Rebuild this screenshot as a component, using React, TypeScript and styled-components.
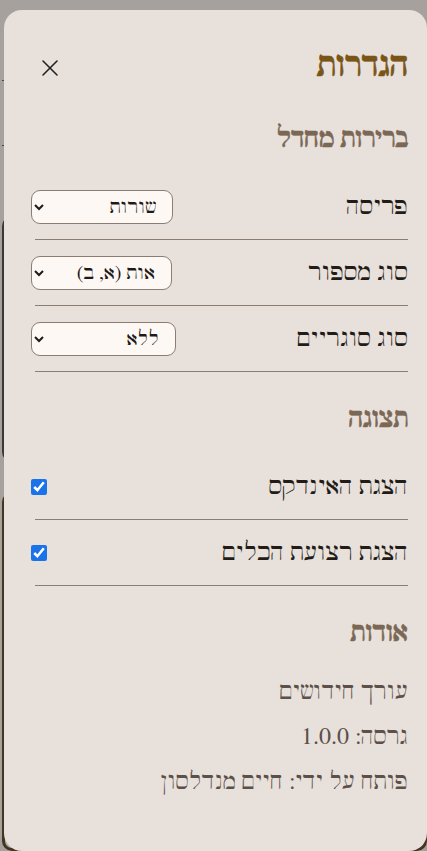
import React, { useState } from 'react';
import styled, { createGlobalStyle } from 'styled-components';
import { X } from 'lucide-react';

const GlobalStyle = createGlobalStyle`
    html, body {
        margin: 0;
        padding: 0;
        height: 100%;
        overflow: hidden;
        background: #f4eee8;
        font-family: "FreeSerif", "Liberation Serif", serif;
    }
    #root {
        height: 100%;
    }
`;

type SelectRowProps = {
    label: string;
    options: string[];
    width: number;
};

const SelectRow = ({ label, options, width }: SelectRowProps) => {
    const [value, setValue] = useState(options[0]);
    return (
        <Row>
            <Label>{label}</Label>
            <Select $width={width} value={value} onChange={(event) => setValue(event.target.value)}>
                {options.map((option) => (
                    <option key={option} value={option}>{option}</option>
                ))}
            </Select>
        </Row>
    );
};

const CheckRow = ({ label }: { label: string }) => {
    const [checked, setChecked] = useState(true);
    return (
        <Row>
            <Label>{label}</Label>
            <Checkbox type="checkbox" checked={checked} onChange={(event) => setChecked(event.target.checked)} />
        </Row>
    );
};

const App = () => {
    return (
        <>
            <GlobalStyle />
            <Page>
                <PageHeader />
                <PageToolbar />
                <PageCard />
                <PageCard $accent />
            </Page>
            <Overlay />
            <Drawer dir="rtl">
                <Header>
                    <Title>הגדרות</Title>
                    <CloseButton type="button" aria-label="סגירה">
                        <X size={28} strokeWidth={1.3} />
                    </CloseButton>
                </Header>

                <Section>
                    <SectionTitle>ברירות מחדל</SectionTitle>
                    <SelectRow label="פריסה" options={['שורות', 'עמודות']} width={142} />
                    <SelectRow label="סוג מספור" options={['אות (א, ב)', 'מספר (1, 2)']} width={141} />
                    <SelectRow label="סוג סוגריים" options={['ללא', 'עגולים', 'מרובעים']} width={145} />
                </Section>

                <Section>
                    <SectionTitle>תצוגה</SectionTitle>
                    <CheckRow label="הצגת האינדקס" />
                    <CheckRow label="הצגת רצועת הכלים" />
                </Section>

                <Section>
                    <SectionTitle>אודות</SectionTitle>
                    <About>
                        <AboutLine>עורך חידושים</AboutLine>
                        <AboutLine>גרסה: 1.0.0</AboutLine>
                        <AboutLine>פותח על ידי: חיים מנדלסון</AboutLine>
                    </About>
                </Section>
            </Drawer>
        </>
    );
};

const Page = styled.div`
    display: flex;
    flex-direction: column;
    height: 100%;
    padding: 0 0 0 2px;
    box-sizing: border-box;
`;

const PageHeader = styled.div`
    flex: none;
    height: 80px;
    border-bottom: 1px solid #555;
`;

const PageToolbar = styled.div`
    flex: none;
    height: 64px;
    margin-bottom: 70px;
    border-bottom: 1px solid #555;
`;

const PageCard = styled.div<{ $accent?: boolean }>`
    flex: ${({ $accent }) => ($accent ? '1' : 'none')};
    height: ${({ $accent }) => ($accent ? 'auto' : '240px')};
    margin-bottom: ${({ $accent }) => ($accent ? '0' : '30px')};
    border: 3px solid ${({ $accent }) => ($accent ? '#4a3414' : '#3e3a38')};
    border-radius: 10px;
    background: #fff;
`;

const Overlay = styled.div`
    position: fixed;
    inset: 0;
    background: rgba(60, 55, 52, 0.42);
`;

const Drawer = styled.aside`
    position: fixed;
    top: 10px;
    left: 4px;
    right: 0;
    bottom: 0;
    box-sizing: border-box;
    padding: 38px 19px 0 27px;
    background: #e8e0da;
    border-radius: 18px;
    overflow: hidden;
`;

const Header = styled.div`
    display: flex;
    align-items: center;
    justify-content: space-between;
    height: 40px;
    margin-bottom: 36px;
`;

const Title = styled.h1`
    margin: -2px 0 0;
    font-size: 33px;
    line-height: 40px;
    font-weight: 700;
    color: #7a5518;
    -webkit-text-stroke: 0.6px #7a5518;
`;

const CloseButton = styled.button`
    display: flex;
    align-items: center;
    justify-content: center;
    width: 40px;
    height: 40px;
    margin-left: -1px;
    padding: 0;
    border: none;
    background: transparent;
    color: #222;
    cursor: pointer;
`;

const Section = styled.section`
    & + & {
        margin-top: 32px;
    }
`;

const SectionTitle = styled.h2`
    margin: 0 0 20px;
    font-size: 26px;
    line-height: 30px;
    font-weight: 700;
    color: #7a6855;
    -webkit-text-stroke: 0.5px #7a6855;
`;

const Row = styled.div`
    display: flex;
    align-items: center;
    justify-content: space-between;
    height: 65px;
    margin-left: 4px;
    border-bottom: 1px solid #8b7d72;
`;

const Label = styled.span`
    font-size: 25px;
    line-height: 32px;
    color: #221c18;
`;

const Select = styled.select<{ $width: number }>`
    width: ${({ $width }) => $width}px;
    height: 34px;
    padding: 0 12px 0 11px;
    margin-left: -4px;
    font-family: "FreeSerif", "Liberation Serif", serif;
    font-size: 20px;
    color: #1e1a18;
    background: #fdf8f4;
    border: 1px solid #8b7d72;
    border-radius: 9px;
`;

const Checkbox = styled.input`
    width: 16px;
    height: 16px;
    margin: 0 0 0 -4px;
    accent-color: #1a73e8;
`;

const About = styled.div`
    display: flex;
    flex-direction: column;
    gap: 16px;
    padding-top: 10px;
`;

const AboutLine = styled.p`
    margin: 0;
    font-size: 24px;
    line-height: 29px;
    color: #5c504a;
`;

export default App;
